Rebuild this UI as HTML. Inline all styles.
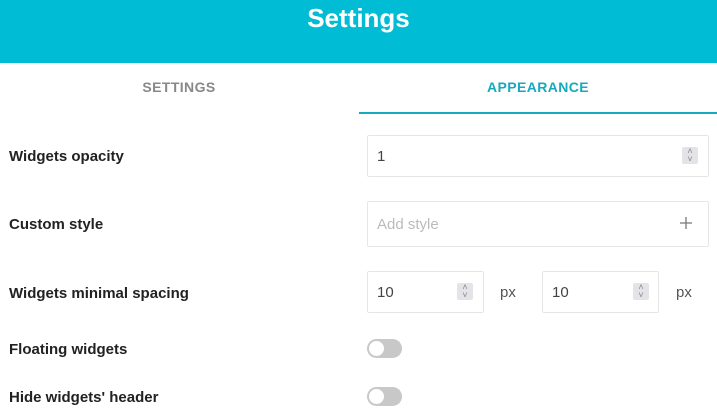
<!DOCTYPE html>
<html><head><style>
*{box-sizing:border-box;margin:0;padding:0}
body{width:717px;height:419px;overflow:hidden;background:#fff;font-family:"Liberation Sans",sans-serif;position:relative}
.hdr{position:absolute;left:0;top:0;width:717px;height:63px;background:#00bcd4;color:#fff;text-align:center;font-weight:bold;font-size:26px;line-height:37px}
.tab{position:absolute;top:79px;font-size:14px;font-weight:bold;letter-spacing:0.4px;text-align:center;width:358px}
.ul{position:absolute;left:359px;top:112px;width:358px;height:2px;background:#17a9bf}
.lbl{position:absolute;left:9px;font-weight:bold;font-size:15px;color:#222}
.box{position:absolute;border:1px solid #e6e6e6;border-radius:2px;font-size:15px;color:#444;padding-left:9px}
.spin{position:absolute;width:16px;height:17px;background:#e3e3e8;border-radius:2px;color:#888;font-size:9px;line-height:8px;text-align:center}
.px{position:absolute;font-size:15px;color:#555;top:284px}
.tg{position:absolute;left:367px;width:35px;height:19px;border-radius:10px;background:#c8c8c8}
.tg:after{content:"";position:absolute;left:2px;top:2px;width:15px;height:15px;border-radius:50%;background:#fff}
</style></head><body>
<div class="hdr">Settings</div>
<div class="tab" style="left:0;color:#888">SETTINGS</div>
<div class="tab" style="left:359px;color:#17a9bf">APPEARANCE</div>
<div class="ul"></div>

<div class="lbl" style="top:148px">Widgets opacity</div>
<div class="box" style="left:367px;top:135px;width:342px;height:42px;line-height:42px">1</div>
<div class="spin" style="left:682px;top:147px">˄<br>˅</div>

<div class="lbl" style="top:216px">Custom style</div>
<div class="box" style="left:367px;top:201px;width:342px;height:46px;line-height:46px;color:#bbb">Add style</div>
<svg style="position:absolute;left:679px;top:216px" width="14" height="14"><path d="M7 1V13M1 7H13" stroke="#777" stroke-width="1.3"/></svg>

<div class="lbl" style="top:285px">Widgets minimal spacing</div>
<div class="box" style="left:367px;top:271px;width:117px;height:42px;line-height:42px">10</div>
<div class="spin" style="left:457px;top:283px">˄<br>˅</div>
<div class="px" style="left:500px">px</div>
<div class="box" style="left:542px;top:271px;width:117px;height:42px;line-height:42px">10</div>
<div class="spin" style="left:633px;top:283px">˄<br>˅</div>
<div class="px" style="left:676px">px</div>

<div class="lbl" style="top:341px">Floating widgets</div>
<div class="tg" style="top:339px"></div>
<div class="lbl" style="top:389px">Hide widgets' header</div>
<div class="tg" style="top:387px"></div>
</body></html>
